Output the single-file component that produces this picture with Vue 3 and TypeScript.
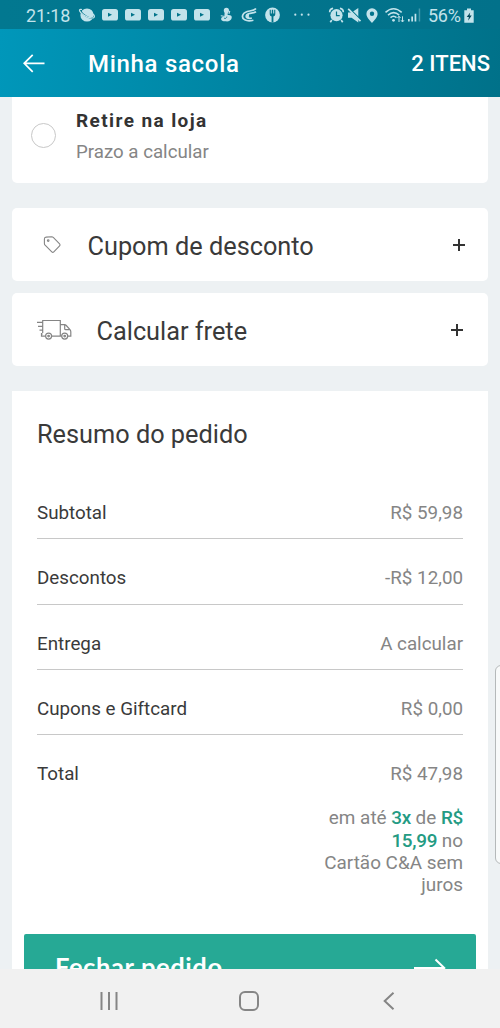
<script setup lang="ts">
interface Row {
  label: string
  value: string
}

const rows: Row[] = [
  { label: 'Subtotal', value: 'R$ 59,98' },
  { label: 'Descontos', value: '-R$ 12,00' },
  { label: 'Entrega', value: 'A calcular' },
  { label: 'Cupons e Giftcard', value: 'R$ 0,00' },
  { label: 'Total', value: 'R$ 47,98' },
]
const videos: number[] = [24, 47, 70, 93, 116]
</script>

<template>
  <div class="screen">
    <div class="status">
      <span class="clock">21:18</span>
      <svg class="notes" width="238" height="20" viewBox="0 0 238 20" fill="#c3e3eb">
        <circle cx="9" cy="10" r="6.6" />
        <path d="M2 4.8C4 9.5 11 14.2 16.5 12.7" fill="none" stroke="#02748a" stroke-width="1.3" />
        <path d="M4 4.5C0 3.5 .8 7 6 10.2C11 13.2 17 14.2 16.4 11.2C16.2 10.2 15.5 9.5 15 9" fill="none" stroke="#c3e3eb" stroke-width="1.2" />
        <g v-for="x in videos" :key="x">
          <rect :x="x" y="4" width="16" height="11.5" rx="2.6" />
          <path :d="`M${x + 6} 7.8l4 2-4 2z`" fill="#02748a" />
        </g>
        <circle cx="148.4" cy="5.4" r="2.6" />
        <path d="M146.8 6.5h3.2l-.4 3.5c3-.3 4.7 1 4.1 3.1-.6 2.6-3.5 3.8-6.2 3.2-2.5.1-4.4-.9-4.4-2.4s1.8-2.2 3.2-2.6z" />
        <path d="M142.8 10.8l3 .4M151.8 5.8l-.9 3" fill="none" stroke="#c3e3eb" stroke-width="1.1" />
        <path d="M146 13.1c1.4.9 2.7.1 2.8-1.5" fill="none" stroke="#02748a" stroke-width=".8" />
        <path d="M178 3.5c-3.6 4-10.5.8-13 6.1-2.2 4.7 3.5 7.4 10.4 5.6M178 6.7c-3 2.5-7.2.1-9.2 3.1-1.8 2.7.9 4.1 5 3.4M171 10c-2.1.1-2.1 2.3.2 2.2" fill="none" stroke="#c3e3eb" stroke-width="1.7" />
        <circle cx="194.5" cy="10" r="7.4" />
        <path d="M191.7 4.8v4.4q0 1.9 1.9 2.2v6h1.8v-6q1.9-.3 1.9-2.2V4.8h-1.1v3.8h-1V4.8h-1.4v3.8h-1V4.8z" fill="#02748a" />
        <circle cx="217.3" cy="9.7" r="1.1" />
        <circle cx="223.8" cy="9.7" r="1.1" />
        <circle cx="230.5" cy="9.7" r="1.1" />
      </svg>
      <svg class="system" width="94" height="20" viewBox="0 0 94 20" fill="#c3e3eb">
        <path d="M3.8 15l-1.5 2.2M13.2 15l1.5 2.2M1.7 7.2Q1.6 3.8 5.1 3.3M15.3 7.2Q15.4 3.8 11.9 3.3" fill="none" stroke="#c3e3eb" stroke-width="1.7" />
        <circle cx="8.5" cy="10.2" r="6.1" />
        <path d="M8.5 6.6v4h3.2" fill="none" stroke="#02748a" stroke-width="1.2" />
        <path d="M20 7.4h3.6L30.3 3v14.4l-6.7-4.6H20z" />
        <path d="M21.2 3.3L33.6 15.7" fill="none" stroke="#02748a" stroke-width="1.4" />
        <path d="M20.2 3.8L32.5 16.2" fill="none" stroke="#c3e3eb" stroke-width="1.7" />
        <path fill-rule="evenodd" d="M44 3.3a5.5 5.5 0 0 0-5.6 5.6c0 3.8 5.6 8.9 5.6 8.9s5.6-5.1 5.6-8.9A5.5 5.5 0 0 0 44 3.3zm0 3.3a2.2 2.2 0 1 1 0 4.4 2.2 2.2 0 0 1 0-4.4z" />
        <path d="M57.5 7.4q8-7.4 16.2 0M60 10.1q5.7-5 11.2 0M62.5 12.6q3-2.7 6 0" fill="none" stroke="#c3e3eb" stroke-width="1.5" />
        <circle cx="65.5" cy="15.3" r="1.4" />
        <path d="M71 17v-5.5M69.5 13l1.5-1.8 1.5 1.8M74.5 11.3v5.5M73 15.2l1.5 1.8 1.5-1.8" fill="none" stroke="#c3e3eb" stroke-width="1" />
        <path d="M80 14h1.7v2.5H80zM83.3 11.5H85v5h-1.7zM86.6 8.7h1.7v7.8h-1.7z" />
        <path d="M90.7 3.5h1.5v13h-1.5z" opacity=".35" />
      </svg>
      <span class="percent">56%</span>
      <svg class="battery" width="10" height="16" viewBox="0 0 10 16">
        <path d="M3 .5h4v1.8h2.7v12.5H.3V2.3H3z" fill="#c3e3eb" />
        <path d="M6.2 4.4L2.7 9h2.2l-.8 3.8 3.6-5.2H5.6z" fill="#02465a" />
      </svg>
    </div>

    <header class="header">
      <svg class="back" width="22" height="20" viewBox="0 0 22 20" fill="none" stroke="#fff" stroke-width="1.7">
        <path d="M21.5 9.3H1.3M9.7.8L1.2 9.3l8.5 8.5" />
      </svg>
      <h1>Minha sacola</h1>
      <span class="count">2 ITENS</span>
    </header>

    <main class="content">
      <section class="card pickup">
        <span class="radio"></span>
        <div>
          <div class="pickup-title">Retire na loja</div>
          <div class="pickup-sub">Prazo a calcular</div>
        </div>
      </section>

      <section class="card option coupon">
        <svg width="20" height="20" viewBox="0 0 20 20" fill="none" stroke="#858585" stroke-width="1.1" stroke-linejoin="round">
          <path d="M2.4 3.9Q2.4 2.2 4.1 2.1l5.5-.3q1.1 0 1.9.8l6.1 6.2q1 1 0 2l-5.8 6q-1 1-2 0L3.1 10.2q-.7-.8-.7-1.8z" />
          <circle cx="6.2" cy="5.6" r=".8" />
        </svg>
        <h2>Cupom de desconto</h2>
        <i class="plus"></i>
      </section>

      <section class="card option shipping">
        <svg width="36" height="22" viewBox="0 0 36 22" fill="none" stroke="#858585" stroke-width="1.2">
          <path d="M5.7 6.5V1.5h17.6v15.6H14.7M8.5 17.1H4.5v-3M23.3 5.7h4.2q1 0 1.8.8l3.7 4.2q.8.9.8 2v4.4h-3M24.6 17.1h-1.3M27.7 6v3.7q0 1 1 1h4.3M0 3.3h5.7M1 7.3h4.7M2.5 11.2h3.2M4 15h1.7M5.7 6v8" />
          <circle cx="11.6" cy="17.1" r="3" />
          <circle cx="27.7" cy="17.1" r="3" />
          <circle cx="11.6" cy="17.1" r=".8" />
          <circle cx="27.7" cy="17.1" r=".8" />
        </svg>
        <h2>Calcular frete</h2>
        <i class="plus"></i>
      </section>

      <section class="summary">
        <h2>Resumo do pedido</h2>
        <div class="rows">
          <div v-for="row in rows" :key="row.label" class="row">
            <span>{{ row.label }}</span>
            <span class="value">{{ row.value }}</span>
          </div>
        </div>
        <p class="installments">em até <b>3x</b> de <b>R$<br />15,99</b> no<br />Cartão C&amp;A sem<br />juros</p>
        <button class="checkout">
          <span class="checkout-label">Fechar pedido</span>
          <svg width="32" height="20" viewBox="0 0 32 20" fill="none" stroke="#fff" stroke-width="2">
            <path d="M0 10h30M21.5 1.5L30.3 10l-8.8 8.5" />
          </svg>
        </button>
      </section>
      <div class="edge-panel"></div>
    </main>

    <nav class="nav">
      <svg width="18" height="18" viewBox="0 0 18 18" stroke="#858585" stroke-width="2">
        <path d="M1.5 0v18M9 0v18M16.5 0v18" />
      </svg>
      <svg class="home" width="20" height="20" viewBox="0 0 20 20" fill="none" stroke="#858585" stroke-width="2">
        <rect x="1" y="1" width="18" height="18" rx="5" />
      </svg>
      <svg width="12" height="18" viewBox="0 0 12 18" fill="none" stroke="#858585" stroke-width="2">
        <path d="M10.5.8L1.7 9l8.8 8.2" />
      </svg>
    </nav>
  </div>
</template>

<style>
body {
  margin: 0;
}
</style>

<style scoped>
.screen {
  width: 500px;
  height: 1028px;
  display: flex;
  flex-direction: column;
  overflow: hidden;
  background: #edf1f3;
  font-family: Roboto, "Liberation Sans", sans-serif;
  color: #3a3a3a;
}
h1,
h2,
p {
  margin: 0;
  font-weight: 400;
}
svg {
  display: block;
  flex: none;
}
.status {
  flex: none;
  height: 29px;
  box-sizing: border-box;
  display: flex;
  align-items: center;
  padding: 2px 25px 0 26px;
  background: linear-gradient(90deg, #027890, #02718a);
  color: #c3e3eb;
  font-size: 18px;
  line-height: 20px;
}
.clock {
  width: 52px;
  letter-spacing: -0.1px;
}
.notes {
  margin-top: -2px;
}
.system {
  margin: -2px 0 0 12px;
}
.percent {
  width: 36px;
  margin-left: 6px;
  letter-spacing: -0.3px;
}
.header {
  flex: none;
  height: 68px;
  box-sizing: border-box;
  display: flex;
  align-items: center;
  padding: 1px 10px 0 23px;
  background: linear-gradient(95deg, #0097ba 0%, #007189 100%);
  color: #fff;
}
.header h1 {
  margin-left: 43px;
  font-size: 24px;
  font-weight: 500;
  line-height: 28px;
  letter-spacing: 0.7px;
}
.count {
  margin-left: auto;
  font-size: 22px;
  font-weight: 500;
  line-height: 28px;
}
.content {
  position: relative;
  flex: none;
  height: 872px;
  overflow: hidden;
  padding: 0 12px;
}
.card {
  background: #fff;
  border-radius: 5px;
}
.pickup {
  height: 86px;
  box-sizing: border-box;
  display: flex;
  padding: 11px 0 0 19px;
  border-radius: 0 0 5px 5px;
}
.radio {
  width: 25px;
  height: 25px;
  box-sizing: border-box;
  margin: 15px 20px 0 0;
  border: 1.5px solid #c8c8c8;
  border-radius: 50%;
}
.pickup-title {
  font-size: 19px;
  font-weight: 700;
  line-height: 26px;
  letter-spacing: 1.4px;
  color: #333;
}
.pickup-sub {
  margin-top: 5px;
  font-size: 18.7px;
  line-height: 26px;
  color: #858585;
}
.option {
  height: 73px;
  display: flex;
  align-items: center;
}
.option h2 {
  padding-top: 5px;
  font-size: 25.3px;
  line-height: 30px;
}
.coupon {
  margin-top: 25px;
  padding: 0 23px 0 30px;
}
.coupon h2 {
  margin-left: 25.5px;
}
.shipping {
  margin-top: 12px;
  padding: 0 25px 0 25px;
}
.shipping h2 {
  margin-left: 23.5px;
}
.plus {
  width: 12px;
  height: 12px;
  margin-left: auto;
  background:
    linear-gradient(#333, #333) center / 12px 2px no-repeat,
    linear-gradient(#333, #333) center / 2px 12px no-repeat;
}
.summary {
  margin-top: 25px;
  height: 620px;
  padding: 29px 12px 0;
  background: #fff;
}
.summary h2 {
  margin-left: 13px;
  font-size: 25.3px;
  line-height: 30px;
}
.rows {
  margin: 24px 13px 0;
}
.row {
  height: 65.3px;
  box-sizing: border-box;
  display: flex;
  justify-content: space-between;
  padding-top: 27px;
  border-bottom: 1px solid #c8c8c8;
  font-size: 18.8px;
  line-height: 24px;
}
.row:last-child {
  border-bottom: 0;
}
.value {
  color: #858585;
}
.installments {
  margin: 7px 13px 0 0;
  text-align: right;
  font-size: 18.9px;
  line-height: 22.3px;
  color: #858585;
}
.installments b {
  font-weight: 500;
  letter-spacing: -0.3px;
  color: #249b83;
}
.checkout {
  width: 452px;
  height: 68px;
  box-sizing: border-box;
  display: flex;
  align-items: center;
  justify-content: space-between;
  margin-top: 37px;
  padding: 0 30px 0 31px;
  border: 0;
  border-radius: 2px;
  background: #26a995;
  color: #fff;
  font: 700 25.5px/28px Lato, Roboto, sans-serif;
  letter-spacing: 0.6px;
}
.checkout-label {
  padding-bottom: 4px;
}
.edge-panel {
  position: absolute;
  top: 568px;
  left: 495px;
  width: 20px;
  height: 199px;
  box-sizing: border-box;
  border: 1px solid #b5b9ba;
  border-radius: 6px;
  background: #f8fafa;
}
.nav {
  flex: none;
  height: 59px;
  display: flex;
  align-items: center;
  justify-content: space-between;
  box-sizing: border-box;
  padding: 4px 105px 0 100px;
  background: #f1f1f1;
}
.home {
  margin-right: 4px;
}
</style>
